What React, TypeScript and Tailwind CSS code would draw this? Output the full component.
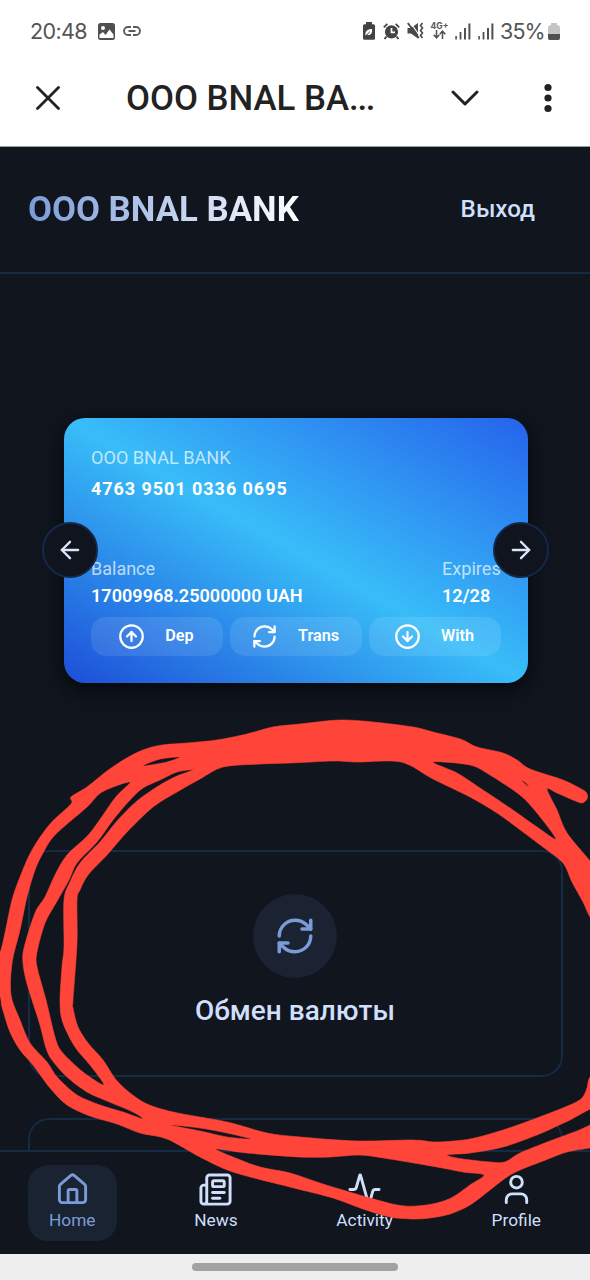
import React from "react";
import {
  Activity,
  ArrowLeft,
  ArrowRight,
  CircleArrowDown,
  CircleArrowUp,
  House,
  Newspaper,
  RefreshCw,
  User,
} from "lucide-react";

type Point = [number, number];

const parse = (s: string): Point[] =>
  s.trim().split(/\s+/).map((p) => p.split(",").map(Number) as Point);

/** Closed curve through all points, with light rounding between them. */
function curve(s: string): string {
  const p = parse(s);
  const n = p.length;
  let d = `M${p[0][0]} ${p[0][1]}`;
  for (let i = 0; i < n; i++) {
    const a = p[(i + n - 1) % n];
    const b = p[i];
    const c = p[(i + 1) % n];
    const e = p[(i + 2) % n];
    const k = 0.15;
    d += `C${b[0] + (c[0] - a[0]) * k} ${b[1] + (c[1] - a[1]) * k} ${c[0] - (e[0] - b[0]) * k} ${c[1] - (e[1] - b[1]) * k} ${c[0]} ${c[1]}`;
  }
  return d + "Z";
}

const MARKER = [
  "71,797 87,787 107,771 125,759 143,750 162,745 187,743 217,740 247,734 273,727 300,724 340,720 373,722 413,727 433,732 457,738 465,741 477,747 503,753 517,760 530,769 563,780 583,790 587,794 587,799 582,803 573,800 557,793 547,789 557,810 567,833 590,861 604,880 604,940 590,917 583,902 572,882 563,863 543,847 523,832 497,813 470,797 433,779 401,762 357,762 333,761 290,763 260,764 223,767 200,779 177,792 153,807 127,832 107,855 88,875 80,890 77,900 77,943 73,1000 73,1008 78,1027 88,1043 103,1060 118,1082 143,1102 173,1112 227,1122 267,1133 300,1137 357,1141 413,1140 437,1142 470,1139 503,1130 537,1118 570,1105 582,1098 587,1088 590,1077 604,1060 604,1102 590,1109 570,1120 557,1126 537,1135 503,1147 470,1153 447,1155 463,1159 490,1162 505,1162 520,1153 550,1141 577,1131 590,1125 604,1118 604,1146 590,1148 567,1152 543,1161 520,1170 507,1177 490,1190 470,1205 450,1214 430,1218 413,1219 390,1217 363,1209 333,1198 290,1187 233,1172 200,1157 167,1139 140,1133 117,1124 90,1116 67,1105 50,1088 33,1065 20,1050 10,1032 2,1007 0,996 -10,975 0,953 5,933 12,900 20,877 32,850 50,824 71,804",
  "130,782 102,792 87,807 55,835 43,853 35,870 27,897 20,930 12,963 11,995 20,1020 30,1043 47,1062 57,1077 77,1095 100,1105 123,1112 143,1119 133,1112 107,1101 87,1092 67,1077 52,1060 46,1048 40,1025 32,1000 26,980 23,963 24,948 35,913 45,897 55,875 67,855 90,833 115,798",
  "193,770 177,772 160,780 143,788 130,800 113,820 97,842 77,863 69,880 56,903 45,923 37,952 37,967 46,1000 55,1037 62,1052 83,1072 104,1085 90,1065 75,1047 63,1023 60,1003 62,967 64,947 64,900 70,882 80,863 100,842 117,821 137,801 160,785 177,776",
  "143,766 160,759 180,757 167,762",
  "433,762 470,765 490,775 520,795 537,813 556,839 537,827 510,808 480,788 457,773",
  "521,780 526,783 529,787 524,783",
  "170,1125 200,1128 227,1133 251,1139 227,1137 200,1131",
  "216,1149 247,1153 300,1157 330,1157 360,1155 390,1159 437,1167 463,1172 484,1175 470,1185 453,1197 437,1203 417,1206 397,1205 363,1196 323,1184 290,1173 260,1167 233,1157",
]
  .map(curve)
  .join("");

function MarkerLoops() {
  return (
    <svg
      className="pointer-events-none absolute inset-0 z-20"
      width="590"
      height="1280"
      viewBox="0 0 590 1280"
      fill="#ff4539"
      stroke="#ff4539"
      strokeWidth="0.6"
      fillRule="evenodd"
    >
      <path d={MARKER} />
    </svg>
  );
}

function SignalBars() {
  return (
    <svg width="16" height="17" viewBox="0 0 16 17" fill="#505050">
      <rect x="0.3" y="13" width="1.6" height="3.5" />
      <rect x="4.6" y="9" width="1.8" height="7.5" />
      <rect x="9" y="5" width="2" height="11.5" />
      <rect x="13.4" y="0.5" width="2" height="16" />
    </svg>
  );
}

function StatusBar() {
  return (
    <div className="flex h-[62px] items-center pl-[30px] pr-[30px] text-[#555]">
      <span className="w-[57px] whitespace-nowrap font-['Inter'] text-[21.5px] font-normal tracking-[-0.65px]">20:48</span>
      <svg className="ml-[11px]" width="17" height="17" viewBox="0 0 17 17">
        <rect width="17" height="17" rx="2.5" fill="#505050" />
        <circle cx="5" cy="5" r="2" fill="#fff" />
        <path d="M1.5 11.5 5 9l2.5 3 4-5.5 4 5v3.5h-14z" fill="#fff" />
      </svg>
      <svg className="ml-[8px]" width="18" height="10" viewBox="0 0 18 10" fill="none" stroke="#5a5a5a" strokeWidth="1.8">
        <path d="M8 1H5a4 4 0 0 0 0 8h3M10 1h3a4 4 0 0 1 0 8h-3M5.500 5h7" />
      </svg>
      <div className="ml-auto flex items-center">
        <svg width="12" height="18" viewBox="0 0 12 18">
          <path d="M3 0h6v2.300h1.500A1.500 1.500 0 0 1 12 3.800v12.500A1.500 1.500 0 0 1 10.500 17.800h-9A1.500 1.500 0 0 1 0 16.300V3.800A1.500 1.500 0 0 1 1.500 2.300H3z" fill="#444" />
          <path d="M2.500 13.500c-.8-4 2-6.500 6.500-6.500.8 4-1.500 7-5 5.800" fill="#fff" />
          <path d="m2.500 14 4.300-4.200" stroke="#444" />
        </svg>
        <svg className="ml-[8px]" width="17" height="17" viewBox="0 0 17 17" fill="none">
          <circle cx="8.500" cy="8.800" r="6.600" fill="#444" />
          <path d="M.8 4.300 4.300.9M16.200 4.300 12.700.9" stroke="#444" strokeWidth="1.700" />
          <path d="m3.500 13.500-2 2.500M13.500 13.500l2 2.500" stroke="#444" strokeWidth="2" />
          <path d="M8.500 5v4.300H12" stroke="#fff" strokeWidth="1.700" />
        </svg>
        <svg className="ml-[7px]" width="17" height="18" viewBox="0 0 17 18" fill="none" stroke="#4a4a4a">
          <path d="M.5 6h3.500l7-5v15.500l-7-5H.5z" fill="#4a4a4a" stroke="none" />
          <path d="m3 0 10.500 15" stroke="#fff" strokeWidth="1.100" />
          <path d="m.8 1 11 15" strokeWidth="1.900" />
          <path d="m15.500 1-2 2.500 2 2.500-2 2.500 2 2.500-2 2.500 2 2.500" strokeWidth="1.600" />
        </svg>
        <div className="ml-[7px] flex h-[18px] w-[17px] flex-col items-center">
          <span className="h-[8px] whitespace-nowrap font-['Inter'] text-[8.5px] font-bold leading-[8px]">4G+</span>
          <svg width="13" height="9" viewBox="0 0 13 9" fill="none" stroke="#505050" strokeWidth="1.500">
            <path d="M3.500 0v7.500M.7 4.800l2.800 3 2.800-3M9.500 9V1.500M6.700 4.200l2.800-3 2.800 3" />
          </svg>
        </div>
        <div className="ml-[7px] flex gap-[7px]">
          <SignalBars />
          <SignalBars />
        </div>
        <span className="ml-[6px] w-[48px] whitespace-nowrap font-['Inter'] text-[21.5px] font-normal tracking-[-0.9px]">35%</span>
        <svg width="12" height="17" viewBox="0 0 12 17">
          <path d="M3 0h6v2a3 3 0 0 1 3 3v10a2 2 0 0 1-2 2H2a2 2 0 0 1-2-2V5a3 3 0 0 1 3-3z" fill="#c4c4c4" />
          <path d="M0 11h12v4a2 2 0 0 1-2 2H2a2 2 0 0 1-2-2z" fill="#505050" />
        </svg>
      </div>
    </div>
  );
}

function TitleBar() {
  return (
    <div className="flex h-[85px] items-center border-b border-[#9a9ba0] pb-[12px] pl-[36px] pr-[38px]">
      <svg width="24" height="24" viewBox="0 0 24 24" fill="none" stroke="#222" strokeWidth="2.800" strokeLinecap="round">
        <path d="m1.500 1.500 21 21M22.500 1.500l-21 21" />
      </svg>
      <h1 className="ml-[66px] w-[260px] whitespace-nowrap text-[34.8px] font-medium leading-10 text-[#222]">
        OOO BNAL BA<span className="tracking-[-1.3px]">...</span>
      </h1>
      <svg className="ml-[65px]" width="28" height="16" viewBox="0 0 28 16" fill="none" stroke="#222" strokeWidth="3" strokeLinecap="round" strokeLinejoin="round">
        <path d="m2 2 12 12L26 2" />
      </svg>
      <svg className="ml-auto" width="8" height="30" viewBox="0 0 8 30" fill="#222">
        <circle cx="4" cy="4.500" r="3.600" />
        <circle cx="4" cy="15" r="3.600" />
        <circle cx="4" cy="25.500" r="3.600" />
      </svg>
    </div>
  );
}

function CardAction({ icon, label }: { icon: React.ReactNode; label: string }) {
  return (
    <button className="flex h-[39px] flex-1 items-center justify-center gap-[20px] rounded-[15px] bg-white/10 pr-[2px] text-[16.2px] font-semibold">
      {icon}
      {label}
    </button>
  );
}

function BankCard() {
  return (
    <div className="relative ml-[64px] mr-[62px] mt-[144px] h-[265px] shrink-0 rounded-[21px] bg-[linear-gradient(to_top_right,#1d4ed8,#38bdf8_50%,#2563eb)] px-[27px] pt-[27px] text-white shadow-[0_6px_20px_rgba(0,0,0,0.7)]">
      <p className="text-[18.1px] leading-[26px] text-white/70">OOO BNAL BANK</p>
      <p className="mt-[5px] text-[18px] font-bold leading-[26px] tracking-[0.95px]">4763 9501 0336 0695</p>
      <div className="mt-[53px] flex justify-between">
        <div>
          <p className="text-[18px] leading-[27px] text-white/70">Balance</p>
          <p className="text-[18.1px] font-semibold leading-[27px]">17009968.25000000 UAH</p>
        </div>
        <div className="w-[59px]">
          <p className="text-[18.1px] leading-[27px] text-white/70">Expires</p>
          <p className="text-[18.1px] font-semibold leading-[27px]">12/28</p>
        </div>
      </div>
      <div className="mt-[8px] flex gap-[7px]">
        <CardAction label="Dep" icon={<CircleArrowUp size={27} />} />
        <CardAction label="Trans" icon={<RefreshCw size={27} />} />
        <CardAction label="With" icon={<CircleArrowDown size={27} />} />
      </div>
      <button className="absolute left-[-22px] top-[104px] flex size-[56px] items-center justify-center rounded-full border-2 border-[#14284a] bg-[#0f141e] text-[#dbe6fd]">
        <ArrowLeft size={28} />
      </button>
      <button className="absolute right-[-21px] top-[104px] flex size-[56px] items-center justify-center rounded-full border-2 border-[#14284a] bg-[#0f141e] text-[#dbe6fd]">
        <ArrowRight size={28} />
      </button>
    </div>
  );
}

function NavItem({ icon, label, active }: { icon: React.ReactNode; label: string; active?: boolean }) {
  return (
    <a className={`flex h-[76px] flex-col items-center rounded-[20px] px-[21px] pt-[7px] ${active ? "bg-[#1a2332] text-[#7b9bd8]" : "text-[#cfdffc]"}`}>
      {icon}
      <span className="mt-[2px] text-[17.3px] leading-[22px]">{label}</span>
    </a>
  );
}

export default function App() {
  return (
    <div className="relative flex h-[1280px] w-[590px] flex-col overflow-hidden bg-white font-['Roboto',sans-serif]">
      <StatusBar />
      <TitleBar />
      <main className="flex h-[1003px] flex-col overflow-hidden bg-[#10151e]">
        <header className="flex h-[127px] shrink-0 items-center justify-between border-b-2 border-[#182a42] pl-[28px] pr-[55px]">
          <span className="bg-gradient-to-r from-[#7b9bd8] to-white bg-clip-text pb-[1px] text-[34.8px] font-bold leading-[42px] text-transparent">OOO BNAL BANK</span>
          <span className="text-[24.2px] font-medium text-[#cfdffc]">Выход</span>
        </header>
        <BankCard />
        <section className="ml-[28px] mr-[27px] mt-[167px] flex h-[227px] shrink-0 flex-col items-center rounded-[21px] border-2 border-[#152a44] pr-[1px] pt-[42px]">
          <div className="flex size-[84px] items-center justify-center rounded-full bg-[#1b2231] text-[#7b9bd8]">
            <RefreshCw size={42} />
          </div>
          <h2 className="mt-[13px] text-[28px] font-medium leading-[40px] text-[#cfdffc]">Обмен валюты</h2>
        </section>
        <section className="ml-[28px] mr-[27px] mt-[41px] h-[100px] shrink-0 rounded-[21px] border-2 border-[#152a44]" />
      </main>
      <nav className="flex h-[104px] shrink-0 items-start justify-between border-t-2 border-[#152a44] bg-[#10151e] px-[28px] pt-[13px]">
        <NavItem active label="Home" icon={<House size={35} />} />
        <NavItem label="News" icon={<Newspaper size={35} />} />
        <NavItem label="Activity" icon={<Activity size={35} />} />
        <NavItem label="Profile" icon={<User size={35} />} />
      </nav>
      <div className="flex h-[26px] items-center justify-center bg-[#eee]">
        <div className="h-[8px] w-[206px] rounded-full bg-[#a2a2a2]" />
      </div>
      <MarkerLoops />
    </div>
  );
}
